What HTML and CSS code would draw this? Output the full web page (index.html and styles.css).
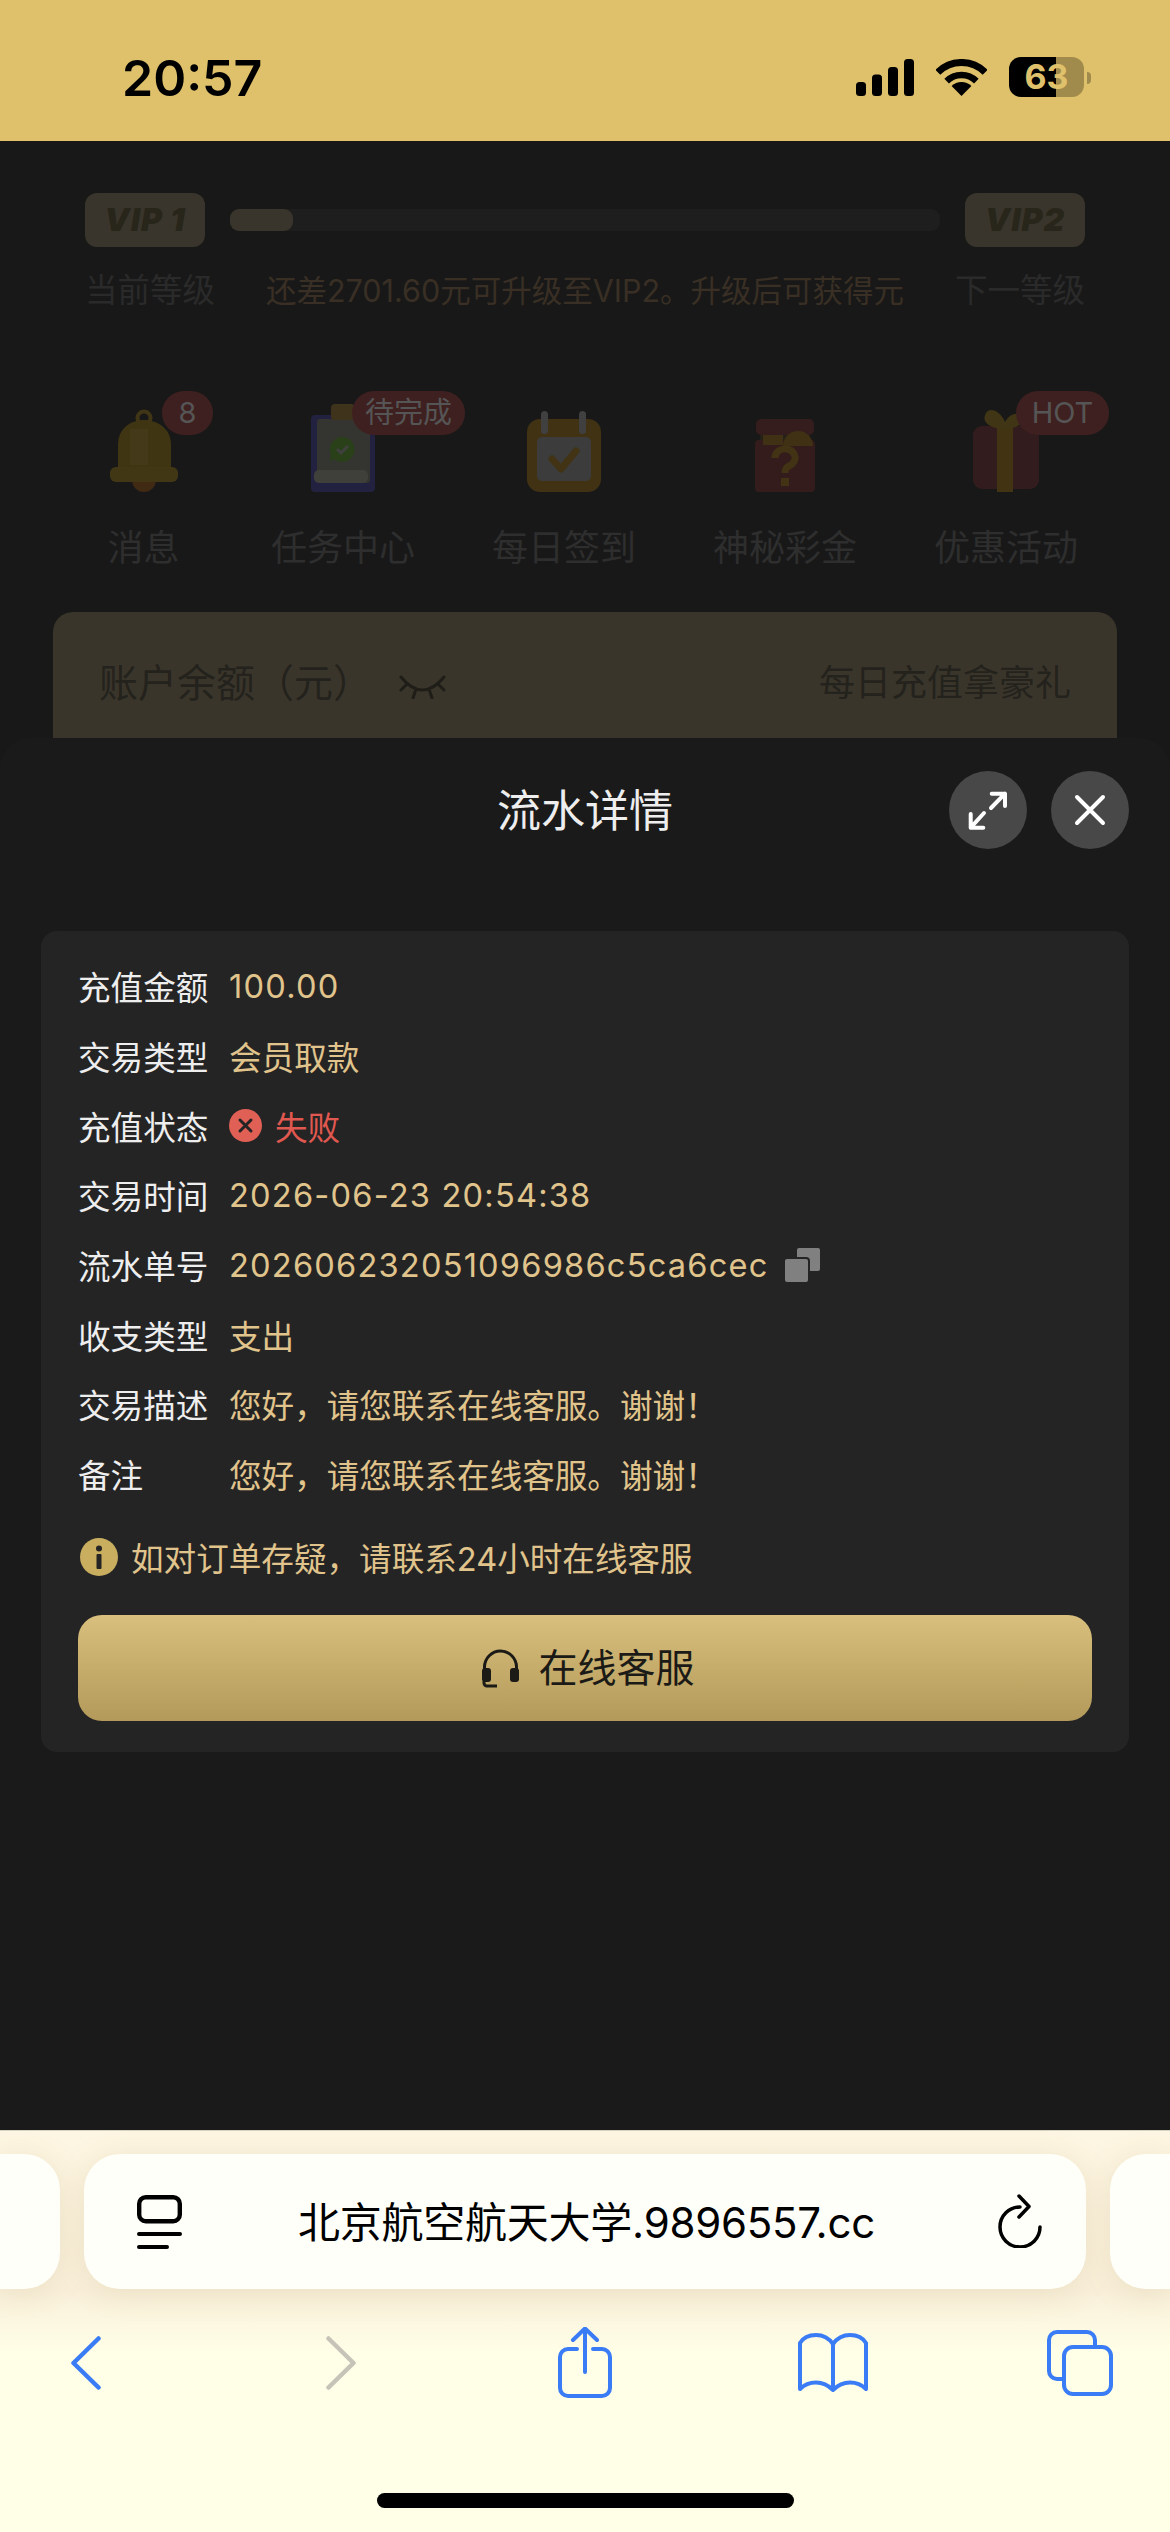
FILE: index.html
```html
<!DOCTYPE html>
<html lang="zh-CN">
<head>
    <meta charset="UTF-8">
    <meta name="viewport" content="width=device-width, initial-scale=1.0">
    <title>流水详情</title>
    <link rel="stylesheet" href="styles.css">
</head>
<body>
    <div class="status-bar">
        <span class="time">20:57</span>
        <div class="status-icons">
            <svg class="signal" viewBox="0 0 58 37">
                <rect x="0" y="23" width="10" height="14" rx="3.5"/>
                <rect x="16" y="15.500" width="10" height="21.500" rx="3.5"/>
                <rect x="32" y="8" width="10" height="29" rx="3.5"/>
                <rect x="48" y="0" width="10" height="37" rx="3.5"/>
            </svg>
            <svg class="wifi" viewBox="0 0 51 37">
                <path d="M1.800 13.300A33.500 33.500 0 0 1 49.200 13.300" fill="none" stroke="#000" stroke-width="7"/>
                <path d="M10.650 22.150A21 21 0 0 1 40.350 22.150" fill="none" stroke="#000" stroke-width="6.500"/>
                <path d="M25.500 37L15.600 27.100A14 14 0 0 1 35.400 27.100Z"/>
            </svg>
            <div class="battery">63</div>
        </div>
    </div>

    <!-- page behind the sheet, dimmed -->
    <div class="backdrop">
        <div class="vip-row">
            <div class="vip-badge">VIP 1</div>
            <div class="vip-track"><div class="vip-fill"></div></div>
            <div class="vip-badge">VIP2</div>
        </div>
        <div class="vip-labels">
            <span>当前等级</span>
            <span class="vip-hint">还差2701.60元可升级至VIP2。升级后可获得元</span>
            <span>下一等级</span>
        </div>

        <div class="menu">
            <div class="menu-item first">
                <div class="menu-icon">
                    <svg width="68" height="83" viewBox="0 0 68 83">
                        <circle cx="34" cy="9" r="6.500" fill="none" stroke="#4a3d14" stroke-width="4"/>
                        <path d="M22 71a12 12 0 0 0 24 0Z" fill="#4c2f12"/>
                        <path d="M8 58V36C8 20 20 11 34 11S61 20 61 36V58Z" fill="#4a3d13"/>
                        <path d="M20 20h18v36H20Z" fill="#544a22" opacity="0.5"/>
                        <rect x="0" y="58" width="68" height="15" rx="6" fill="#4d3f14"/>
                    </svg>
                </div>
                <span class="menu-tag tag-count">8</span>
                <span class="menu-label">消息</span>
            </div>
            <div class="menu-item">
                <div class="menu-icon">
                    <svg width="64" height="88" viewBox="0 0 64 88">
                        <rect x="0" y="11" width="64" height="77" rx="4" fill="#25254a"/>
                        <rect x="6" y="15" width="53" height="64" rx="3" fill="#3b3b38"/>
                        <rect x="20" y="0" width="24" height="16" rx="4" fill="#4a3a1c"/>
                        <path d="M31 33a12.500 12.500 0 1 1-8 22l-4 3 1-7a12.500 12.500 0 0 1 11-18Z" fill="#2f4a1a"/>
                        <path d="M26 45l4 4 7-7" fill="none" stroke="#4a4a48" stroke-width="3"/>
                        <rect x="3" y="66" width="54" height="13" rx="5" fill="#4a4a44"/>
                    </svg>
                </div>
                <span class="menu-tag tag-wide">待完成</span>
                <span class="menu-label">任务中心</span>
            </div>
            <div class="menu-item">
                <div class="menu-icon">
                    <svg width="74" height="81" viewBox="0 0 74 81">
                        <rect x="0" y="8" width="74" height="73" rx="13" fill="#4c3912"/>
                        <rect x="14" y="0" width="7" height="23" rx="3.500" fill="#4a4a4a"/>
                        <rect x="52" y="0" width="7" height="23" rx="3.500" fill="#4a4a4a"/>
                        <rect x="10" y="26" width="54" height="44" rx="5" fill="#454545"/>
                        <path d="M25 48l9 10 15-18" fill="none" stroke="#4d3a14" stroke-width="7" stroke-linecap="round" stroke-linejoin="round"/>
                    </svg>
                </div>
                <span class="menu-label">每日签到</span>
            </div>
            <div class="menu-item">
                <div class="menu-icon">
                    <svg width="60" height="75" viewBox="0 0 60 75">
                        <path d="M20 3h20l2 4H18Z" fill="#4a3814"/>
                        <rect x="1" y="2" width="58" height="16" rx="5" fill="#3c1f1e"/>
                        <rect x="5" y="18" width="50" height="12" fill="#2a2418"/>
                        <rect x="0" y="23" width="60" height="52" rx="4" fill="#3a1e1c"/>
                        <path d="M8 18h20v10H8Z" fill="#4a3814"/>
                        <path d="M28 30a15 15 0 0 1 30 0Z" fill="#4a3814" transform="translate(0 -1)"/>
                        <path d="M20 41a10 9 0 1 1 14 8c-3 2-4 3-4 7" fill="none" stroke="#4d3a14" stroke-width="7"/>
                        <rect x="26" y="61" width="8" height="8" fill="#4d3a14"/>
                    </svg>
                </div>
                <span class="menu-label">神秘彩金</span>
            </div>
            <div class="menu-item">
                <div class="menu-icon">
                    <svg width="68" height="84" viewBox="0 0 68 84">
                        <rect x="1" y="18" width="66" height="63" rx="9" fill="#3a1e20"/>
                        <rect x="25" y="18" width="16" height="66" fill="#4d3c12"/>
                        <path d="M33 22C20 20 10 16 13 7 16-2 28 2 33 14 38 4 48 4 50 10S44 20 33 22Z" fill="#4a3d14"/>
                    </svg>
                </div>
                <span class="menu-tag tag-hot">HOT</span>
                <span class="menu-label">优惠活动</span>
            </div>
        </div>

        <div class="balance-card">
            <div class="balance-left">
                <span>账户余额（元）</span>
                <svg class="eye" width="47" height="24" viewBox="0 0 47 24">
                    <path d="M2 2C10 12 17 15 23.500 15S37 12 45 2M8 9L2 15M17 14L14 23M30 14L33 23M39 9L45 15" fill="none" stroke="#1f1d18" stroke-width="3" stroke-linecap="round"/>
                </svg>
            </div>
            <span class="balance-link">每日充值拿豪礼</span>
        </div>
    </div>

    <div class="sheet">
        <div class="sheet-header">
            <span></span>
            <h1 class="sheet-title">流水详情</h1>
            <div class="sheet-actions">
                <button class="round-btn">
                    <svg width="78" height="78" viewBox="0 0 78 78">
                        <path d="M42.700 22.700H56V35M56 22.700L42 37M21.700 43V56.700H34.300M21.700 56.700L35 42" fill="none" stroke="#fff" stroke-width="4" stroke-linecap="round" stroke-linejoin="round"/>
                    </svg>
                </button>
                <button class="round-btn">
                    <svg width="78" height="78" viewBox="0 0 78 78">
                        <path d="M26 26L52 52M52 26L26 52" fill="none" stroke="#fff" stroke-width="4" stroke-linecap="round"/>
                    </svg>
                </button>
            </div>
        </div>

        <div class="detail-card">
            <div class="detail-row"><span class="detail-name">充值金额</span><span class="detail-value num">100.00</span></div>
            <div class="detail-row"><span class="detail-name">交易类型</span><span class="detail-value">会员取款</span></div>
            <div class="detail-row">
                <span class="detail-name">充值状态</span>
                <span class="detail-value failed">
                    <svg class="fail-icon" width="33" height="33" viewBox="0 0 33 33">
                        <circle cx="16.500" cy="16.500" r="16.500" fill="#e06055"/>
                        <path d="M11 11L22 22M22 11L11 22" fill="none" stroke="#242424" stroke-width="3" stroke-linecap="round"/>
                    </svg>
                    失败
                </span>
            </div>
            <div class="detail-row"><span class="detail-name">交易时间</span><span class="detail-value num">2026-06-23 20:54:38</span></div>
            <div class="detail-row">
                <span class="detail-name">流水单号</span>
                <span class="detail-value num">202606232051096986c5ca6cec</span>
                <svg class="copy-icon" width="35" height="34" viewBox="0 0 35 34">
                    <rect x="12" y="0" width="23" height="23" rx="2" fill="#808080"/>
                    <rect x="-1" y="10" width="25" height="25" rx="3" fill="#808080" stroke="#242424" stroke-width="2"/>
                </svg>
            </div>
            <div class="detail-row"><span class="detail-name">收支类型</span><span class="detail-value">支出</span></div>
            <div class="detail-row"><span class="detail-name">交易描述</span><span class="detail-value">您好，请您联系在线客服。谢谢！</span></div>
            <div class="detail-row"><span class="detail-name">备注</span><span class="detail-value">您好，请您联系在线客服。谢谢！</span></div>

            <div class="notice">
                <svg width="38" height="38" viewBox="0 0 38 38">
                    <circle cx="19" cy="19" r="19" fill="#c9ae5f"/>
                    <circle cx="19" cy="10.500" r="3" fill="#242424"/>
                    <rect x="16.500" y="16" width="5" height="15" rx="1" fill="#242424"/>
                </svg>
                <span>如对订单存疑，请联系24小时在线客服</span>
            </div>

            <button class="service-btn">
                <svg class="headset" width="39" height="40" viewBox="0 0 39 40">
                    <path d="M3.500 24V19A16 16 0 0 1 35.500 19V24" fill="none" stroke="#1b1a16" stroke-width="3"/>
                    <rect x="1" y="20" width="9" height="14" rx="3" fill="#1b1a16"/>
                    <rect x="29" y="20" width="9" height="14" rx="3" fill="#1b1a16"/>
                    <path d="M3 33V35A3 3 0 0 0 6 38H16" fill="none" stroke="#1b1a16" stroke-width="3"/>
                </svg>
                <span class="service-text">在线客服</span>
            </button>
        </div>
    </div>

    <div class="safari">
        <div class="tab-strip">
            <div class="tab-peek left"></div>
            <div class="address-bar">
                <svg class="reader" width="45" height="54" viewBox="0 0 45 54">
                    <rect x="2.200" y="2.200" width="40.600" height="24" rx="6.500" fill="none" stroke="#000" stroke-width="4.400"/>
                    <path d="M2 39H43M2 52H30" fill="none" stroke="#000" stroke-width="4" stroke-linecap="round"/>
                </svg>
                <span class="address-text">北京航空航天大学.9896557.cc</span>
                <svg class="reload" width="44" height="54" viewBox="0 0 44 54">
                    <path d="M42 33A20 20 0 1 1 22 13" fill="none" stroke="#000" stroke-width="3.500" stroke-linecap="round"/>
                    <path d="M21 2L31 12.500L21 23" fill="none" stroke="#000" stroke-width="3.500" stroke-linecap="round" stroke-linejoin="round"/>
                </svg>
            </div>
            <div class="tab-peek right"></div>
        </div>

        <div class="toolbar">
            <svg class="tool-back" width="30" height="54" viewBox="0 0 30 54">
                <path d="M27.500 2.500L2.500 27L27.500 51.500" fill="none" stroke="#3a7cf5" stroke-width="4.500" stroke-linecap="round" stroke-linejoin="round"/>
            </svg>
            <svg class="tool-forward" width="30" height="54" viewBox="0 0 30 54">
                <path d="M2.500 2.500L27.500 27L2.500 51.500" fill="none" stroke="#c6c4b8" stroke-width="4.500" stroke-linecap="round" stroke-linejoin="round"/>
            </svg>
            <svg class="tool-share" width="56" height="71" viewBox="0 0 56 71">
                <path d="M20 22H11A8 8 0 0 0 3 30V61A8 8 0 0 0 11 69H45A8 8 0 0 0 53 61V30A8 8 0 0 0 45 22H36M28 45V2M16 13L28 1.500L40 13" fill="none" stroke="#3a7cf5" stroke-width="4" stroke-linecap="round" stroke-linejoin="round"/>
            </svg>
            <svg class="tool-book" width="71" height="59" viewBox="0 0 71 59">
                <path d="M36 11C31 4 24 2 19 2C12 2 6 5 3 10V56C7 52 13 49.500 19 49.500C25 49.500 31 52 36 57C41 52 47 49.500 53 49.500C59 49.500 65 52 69 56V10C66 5 60 2 53 2C48 2 41 4 36 11V57" fill="none" stroke="#3a7cf5" stroke-width="4" stroke-linecap="round" stroke-linejoin="round"/>
            </svg>
            <svg class="tool-tabs" width="67" height="66" viewBox="0 0 67 66">
                <rect x="18" y="17" width="47" height="47" rx="9" fill="none" stroke="#3a7cf5" stroke-width="4"/>
                <path d="M18 49H11A8 8 0 0 1 3 41V10A8 8 0 0 1 11 2H41A8 8 0 0 1 49 10V17" fill="none" stroke="#3a7cf5" stroke-width="4"/>
            </svg>
        </div>

        <div class="home-bar"></div>
    </div>
</body>
</html>
```

FILE: styles.css
```css
* {
    box-sizing: border-box;
}

body {
    margin: 0;
    width: 1170px;
    height: 2532px;
    overflow: hidden;
    display: flex;
    flex-direction: column;
    background-color: #181818;
    font-family: 'Inter', 'Noto Sans CJK SC', sans-serif;
}

svg {
    display: block;
    flex-shrink: 0;
}

/* status bar */
.status-bar {
    height: 141px;
    flex-shrink: 0;
    background-color: #dfc06b;
    display: flex;
    justify-content: space-between;
    padding: 57px 86px 0 122px;
}

.time {
    font-size: 50px;
    line-height: 42px;
    font-weight: 600;
    color: #000;
}

.status-icons {
    display: flex;
    align-items: flex-start;
}

.signal {
    width: 58px;
    height: 37px;
    margin-top: 2px;
}

.wifi {
    width: 51px;
    height: 37px;
    margin: 2px 22px 0 22px;
}

.battery {
    position: relative;
    width: 75px;
    height: 40px;
    border-radius: 12px;
    background: linear-gradient(90deg, #000 63%, #a08a4c 63%);
    color: #dfc06b;
    font-size: 34px;
    line-height: 40px;
    font-weight: 700;
    text-align: center;
}

.battery::after {
    content: "";
    position: absolute;
    left: 78px;
    top: 15px;
    width: 4px;
    height: 12px;
    border-radius: 0 6px 6px 0;
    background-color: #a08a4c;
}

/* dimmed page */
.backdrop {
    height: 597px;
    flex-shrink: 0;
    overflow: hidden;
    padding-top: 52px;
}

.vip-row {
    display: flex;
    align-items: center;
    gap: 25px;
    padding: 0 85px;
}

.vip-badge {
    width: 120px;
    height: 54px;
    flex-shrink: 0;
    border-radius: 12px;
    background-color: #3a352c;
    color: #28251a;
    font-size: 32px;
    line-height: 54px;
    font-weight: 900;
    font-style: italic;
    text-align: center;
    letter-spacing: 1px;
    white-space: nowrap;
}

.vip-track {
    flex: 1;
    height: 22px;
    border-radius: 9px;
    background-color: #1e1e1e;
}

.vip-fill {
    width: 63px;
    height: 22px;
    border-radius: 9px;
    background-color: #3a352c;
}

.vip-labels {
    display: flex;
    justify-content: space-between;
    align-items: center;
    margin-top: 26px;
    padding: 0 85px;
    font-size: 32.500px;
    line-height: 36px;
    color: #2a2a2a;
}

.vip-hint {
    font-size: 30.500px;
    color: #392f24;
}

.menu {
    display: flex;
    gap: 77px;
    margin-top: 82px;
    padding-left: 93px;
}

.menu-item {
    position: relative;
    width: 144px;
    display: flex;
    flex-direction: column;
    align-items: center;
}

.menu-item.first {
    width: 101px;
}

.menu-icon {
    height: 105px;
    display: flex;
    align-items: flex-end;
    padding-bottom: 4px;
    opacity: 0.8;
}

.menu-tag {
    position: absolute;
    top: 0;
    height: 44px;
    border-radius: 22px;
    background-color: #3f2020;
    color: #555;
    font-size: 29px;
    line-height: 44px;
    text-align: center;
}

.tag-count {
    left: 69px;
    width: 51px;
}

.tag-wide {
    left: 81px;
    width: 113px;
}

.tag-hot {
    left: 82px;
    width: 93px;
}

.menu-label {
    margin-top: 32px;
    font-size: 36px;
    line-height: 40px;
    color: #2e2e2e;
    white-space: nowrap;
}

.balance-card {
    height: 200px;
    margin: 44px 53px 0;
    border-radius: 20px 20px 0 0;
    background-color: #3a352b;
    display: flex;
    justify-content: space-between;
    align-items: flex-start;
    padding: 49px 46px 0 46px;
    color: #24221c;
}

.balance-left {
    display: flex;
    align-items: center;
    gap: 27px;
    font-size: 39px;
    line-height: 44px;
}

.eye {
    margin-top: 8px;
}

.balance-link {
    font-size: 36px;
    line-height: 44px;
}

/* bottom sheet */
.sheet {
    flex: 1;
    border-radius: 30px 30px 0 0;
    background-color: #1a1a1a;
    padding-top: 32px;
}

.sheet-header {
    display: grid;
    grid-template-columns: 1fr auto 1fr;
    align-items: center;
    height: 78px;
    margin-bottom: 83px;
    padding: 0 41px;
}

.sheet-title {
    margin: 2px 0 0;
    font-size: 44px;
    line-height: 78px;
    font-weight: 400;
    color: #eee;
}

.sheet-actions {
    display: flex;
    justify-content: flex-end;
    gap: 24px;
}

.round-btn {
    width: 78px;
    height: 78px;
    padding: 0;
    border: none;
    border-radius: 50%;
    background-color: #484848;
}

.detail-card {
    margin: 0 41px;
    padding: 20px 37px 31px;
    border-radius: 16px;
    background-color: #242424;
}

.detail-row {
    height: 69.700px;
    display: flex;
    align-items: center;
    font-size: 32.600px;
}

.detail-name {
    width: 151px;
    flex-shrink: 0;
    color: #eee;
}

.detail-value {
    color: #e0c48c;
    white-space: nowrap;
}

/* latin and digits run a little wider here */
.num {
    letter-spacing: 1.200px;
}

.failed {
    display: flex;
    align-items: center;
    gap: 13px;
    color: #e0584f;
}

.copy-icon {
    margin-left: 16px;
}

.notice {
    display: flex;
    align-items: center;
    gap: 13px;
    height: 38px;
    margin-top: 29px;
    padding-left: 2px;
    font-size: 32.600px;
    color: #e0c48c;
}

.service-btn {
    width: 100%;
    height: 106px;
    margin-top: 39px;
    border: none;
    border-radius: 24px;
    background: linear-gradient(180deg, #d9bf7d 0%, #b49a5a 100%);
    display: flex;
    justify-content: center;
    align-items: center;
    gap: 18px;
    font-family: inherit;
    font-size: 39px;
    color: #1b1a16;
}

.headset {
    margin-left: 6px;
}

.service-text {
    margin-bottom: 5px;
}

/* browser chrome */
.safari {
    height: 402px;
    flex-shrink: 0;
    border-top: 1px solid #d8d3c0;
    background: linear-gradient(180deg, #fdf6e2 0%, #f9f0da 40%, #fffee6 55%);
    padding-top: 23px;
}

.tab-strip {
    display: flex;
    gap: 24px;
    height: 135px;
}

.tab-peek {
    height: 135px;
    background-color: #fffffa;
    box-shadow: 0 4px 30px rgba(160, 130, 70, 0.15);
}

.tab-peek.left {
    width: 60px;
    border-radius: 0 36px 36px 0;
}

.tab-peek.right {
    flex: 1;
    border-radius: 36px 0 0 36px;
}

.address-bar {
    width: 1002px;
    height: 135px;
    border-radius: 36px;
    background-color: #fffffa;
    box-shadow: 0 4px 30px rgba(160, 130, 70, 0.15);
    display: grid;
    grid-template-columns: 1fr auto 1fr;
    align-items: center;
    padding: 0 44px 0 53px;
}

.reload {
    justify-self: end;
    margin-top: -2px;
}

.address-text {
    margin: 0 6px 4px 0;
    font-size: 42px;
    letter-spacing: -0.250px;
    color: #000;
    white-space: nowrap;
}

.toolbar {
    display: flex;
    align-items: center;
    height: 71px;
    margin-top: 38px;
    padding-left: 71px;
}

.tool-forward {
    margin-left: 225px;
}

.tool-share {
    margin-left: 201px;
}

.tool-book {
    margin-left: 184px;
}

.tool-tabs {
    margin-left: 178px;
}

.home-bar {
    width: 417px;
    height: 15px;
    margin: 95px auto 0;
    border-radius: 8px;
    background-color: #000;
}
```
